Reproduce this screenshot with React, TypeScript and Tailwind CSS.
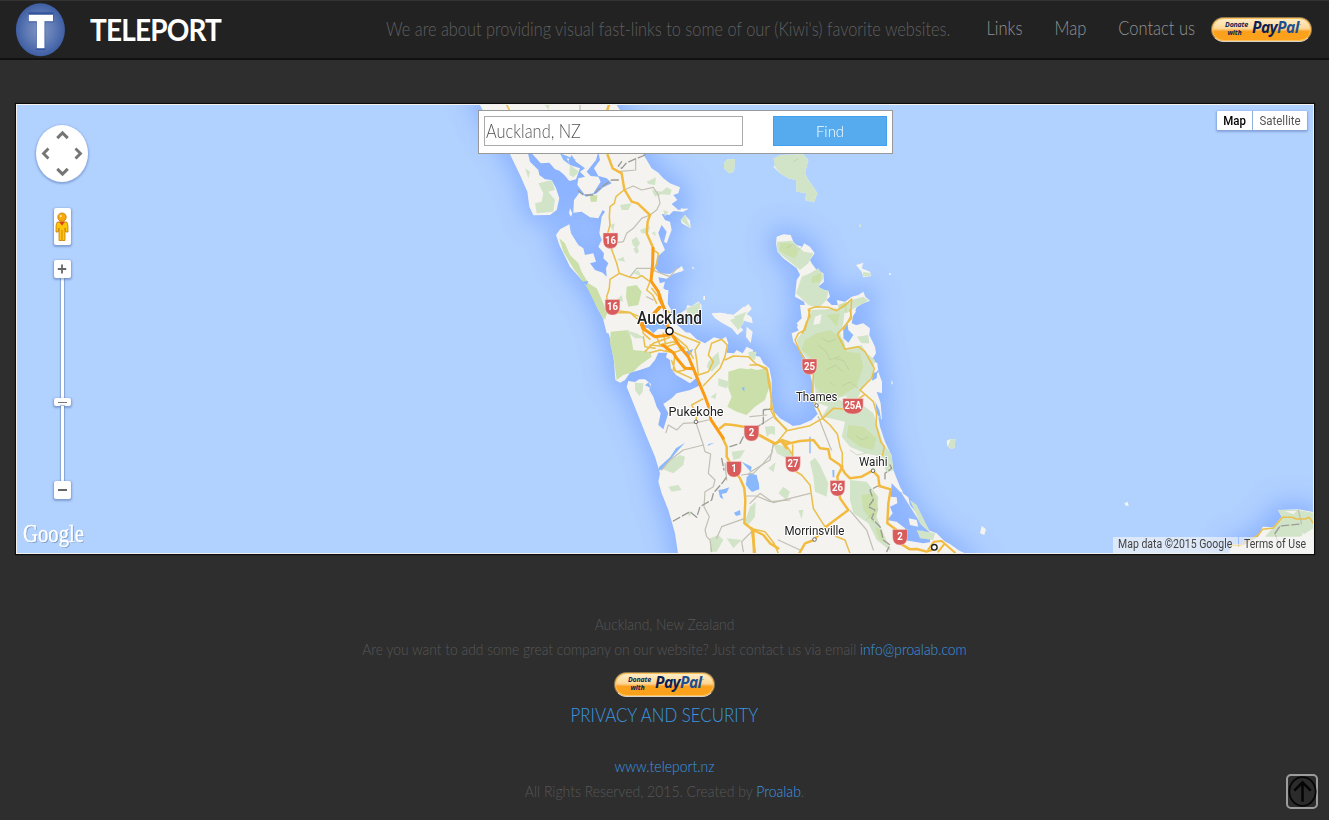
import type { ReactNode } from 'react';
import { ChevronDown, ChevronLeft, ChevronRight, ChevronUp } from 'lucide-react';

const SEA = '#b1d1ff';
const LAND = '#f4f3f0';
const PARK = '#cbdfaa';
const WOOD = '#d2e4c8';

/* Each sheet of the map is drawn at three units to the pixel. */
const NORTH = 'translate(470 100) scale(.33333)';
const GULF = 'translate(680 100) scale(.33333)';
const CITY = 'translate(590 300) scale(.33333)';
const THAMES = 'translate(750 310) scale(.33333)';
const BAY = 'translate(930 400) scale(.33333)';

function Land() {
  return (
    <>
      <g transform={NORTH}>
        <path d="M22 0 L430 0 480 75 520 163 545 205 565 218 580 235 600 250 630 262 625 280 610 285 622 300 605 312 625 330 655 325 640 335 610 333 598 345 575 342 585 360 600 365 605 390 590 430 582 425 590 395 575 375 565 398 572 420 585 450 562 470 556 505 570 520 600 522 636 498 640 512 610 522 590 536 565 532 570 550 585 545 580 565 595 575 592 610 605 632 595 650 650 700 410 700 395 640 375 595 340 545 300 500 268 435 258 405 270 388 298 373 303 400 325 435 340 445 345 465 370 460 378 485 360 490 375 510 398 518 410 530 408 505 415 490 400 475 402 460 385 440 395 420 388 400 395 350 405 335 398 330 385 355 360 352 335 335 310 338 312 300 328 278 350 290 380 280 400 262 425 250 410 235 385 228 372 205 390 180 385 155 378 180 350 215 362 228 385 230 392 245 370 280 345 285 322 255 325 235 345 230 330 215 345 205 318 185 305 165 295 182 300 195 330 205 318 238 298 243 283 225 268 212 255 208 238 188 212 190 190 165 172 150 175 165 180 185 205 210 208 225 225 238 245 240 258 265 268 295 260 330 240 345 190 346 178 320 172 275 150 225 120 163 80 110Z" />
      </g>
      <g transform={CITY}>
        <path d="M0 -30 L235 -30 232 20 245 45 250 80 268 95 300 98 320 118 345 130 372 112 395 118 408 110 415 130 410 158 432 160 440 150 458 160 470 140 490 150 485 165 510 170 520 190 538 205 545 240 545 300 552 335 570 355 600 372 640 400 640 800 270 800 255 700 235 630 215 580 205 545 210 520 195 470 170 410 150 360 130 310 110 260 115 243 135 246 148 238 165 238 183 252 178 270 190 290 200 320 212 340 205 375 220 388 235 340 220 312 245 295 260 280 300 270 332 255 318 235 300 250 280 238 258 225 243 205 240 180 228 172 232 158 205 158 195 180 178 200 150 210 120 218 105 240 90 248 76 240 72 185 60 115 45 65 20 20Z" />
      </g>
      <g transform={GULF}>
        <path d="M290 410 L310 403 332 405 340 425 350 435 368 440 372 430 390 440 404 460 390 480 395 490 410 510 430 520 432 545 415 560 430 570 445 572 450 590 440 600 455 615 475 620 470 600 495 605 515 590 535 585 550 575 556 590 570 602 545 612 530 622 520 645 515 670 540 680 550 700 360 700 350 680 365 670 378 630 372 605 345 590 350 540 360 525 350 505 330 490 310 475 292 455 288 430Z" />
      </g>
      <g transform={THAMES}>
        <path d="M150 -15 L305 -15 318 5 295 35 300 50 340 40 360 55 358 75 375 110 378 130 365 150 382 160 385 185 396 215 396 250 380 245 392 280 396 330 385 320 390 350 405 395 424 435 430 480 450 530 460 548 450 545 425 520 422 560 440 562 442 580 420 590 428 610 412 630 440 635 465 655 462 690 520 700 548 695 575 690 600 702 650 738 -40 738 -40 350 -10 360 65 320 80 335 110 350 150 345 185 330 203 312 192 290 190 230 170 150 150 120 130 95 125 70 150 60 140 40 155 25Z" />
        <path d="M452 545 L475 562 480 585 500 610 520 632 545 672 515 645 490 605Z" />
      </g>
      <g transform={BAY}>
        <path d="M0 392 L20 400 60 440 110 462 0 465Z M895 465 L905 432 940 435 985 410 998 380 1030 382 1055 350 1044 330 1105 328 1150 336 1150 465Z" />
      </g>
    </>
  );
}

function Islands() {
  return (
    <>
      <path transform={NORTH} d="M300 325 L307 340 303 350 297 340Z M540 505 L550 512 548 530Z" />
      <path transform={CITY} d="M292 15 L310 20 325 5 335 20 328 42 305 48 285 42Z M365 42 L390 38 430 45 455 28 475 12 485 25 470 42 485 52 488 70 462 62 445 75 460 90 442 105 425 85 395 68 375 55Z M470 80 L488 95 482 130 468 110Z" />
      <path transform={GULF} d="M132 190 L142 178 165 178 162 215 148 220 132 205Z M280 175 L295 178 300 165 370 163 385 180 375 220 385 240 400 260 412 280 402 307 375 300 380 280 350 275 348 240 325 235 300 220 280 200 290 192Z M2 325 L25 328 5 335Z M2 360 L15 345 30 362 32 385 5 370Z M528 495 L550 488 545 505 570 515 573 528 550 532 545 515Z M537 374 h6 v6 h-6Z M627 518 l10 5 -10 2Z M70 588 h5 v12 h-5Z M36 498 l8 8 -6 1Z M0 500 l12 8 -12 8Z M0 640 L25 625 55 605 65 615 62 640 40 650Z M95 640 L120 638 160 645 190 620 215 628 190 650 190 670 175 690 150 660 110 655Z" />
      <path transform={THAMES} d="M476 625 L500 630 505 650 480 645Z M515 660 L540 680 520 685Z M424 211 l5 8 -4 5Z" />
      <path transform={BAY} d="M155 377 L168 388 163 405 150 400Z M583 310 L593 305 596 317 587 317Z M50 122 L62 117 76 118 74 143 64 147 52 138Z" />
    </>
  );
}

function Terrain() {
  return (
    <>
      <g transform={NORTH} fill={WOOD}>
        <path fill={PARK} d="M268 415 L285 430 300 465 325 490 335 515 355 550 380 565 400 610 412 640 402 660 380 620 350 560 310 505 280 455Z M470 560 L500 555 515 575 505 615 475 620 468 590Z M360 288 L382 285 380 305 362 305Z" />
        <path d="M195 310 L215 305 220 280 205 250 245 240 255 270 235 275 255 300 250 335 200 340Z M300 195 L328 215 310 232 298 225Z M450 315 L485 310 475 330 455 330Z M545 270 L575 275 590 262 605 270 600 285 575 283 555 290Z M530 245 L558 232 555 255 535 252Z M485 420 L500 410 510 430 500 445 488 435Z M510 390 L540 378 535 400 515 400Z M420 375 l14 -5 -4 25Z M440 480 l20 -10 5 15Z M165 205 l15 10 -5 20Z M225 15 L240 10 235 30Z M440 600 l15 -15 5 20Z M580 330 l15 5 -10 15Z M490 520 l15 -10 10 20Z M490 445 l12 -4 5 15 -10 5Z M545 400 l10 -6 2 14Z" />
      </g>
      <g transform={GULF} fill={WOOD}>
        <path d="M132 190 L142 178 165 178 162 215 148 220 132 205Z M280 175 L300 165 370 163 385 180 375 220 385 240 400 260 412 280 402 307 375 300 380 280 350 275 348 240 325 235 300 220 285 200Z M290 425 L335 422 360 445 372 455 400 460 385 490 360 510 330 485 292 455Z M365 530 L390 520 415 505 432 530 415 560 445 575 440 600 415 625 385 615 348 580 355 560Z M480 620 L515 600 550 590 565 602 530 620 500 640 475 635Z M395 640 L440 630 480 650 470 695 390 700Z M2 360 L15 345 32 385Z M550 515 L573 520 568 530 548 528Z M150 660 L190 645 190 670 175 690Z M25 625 L60 605 62 640 35 645Z M537 374 h6 v6 h-6Z" />
        <path fill={PARK} d="M300 430 L330 428 355 455 345 475 320 465 298 450Z M395 530 L425 518 420 545 395 550Z M475 615 L500 605 500 635 478 640Z" />
      </g>
      <g transform={CITY}>
        <path fill={PARK} d="M62 95 L115 90 125 120 130 150 180 155 185 170 150 195 130 215 100 225 80 240 72 180 60 130Z M415 215 L450 205 500 210 530 205 538 260 525 300 495 320 470 345 440 335 412 320 425 290 415 265Z M10 -5 L35 5 48 60 25 25Z" />
        <path fill={WOOD} d="M135 248 L160 250 158 275 148 288 135 270Z M105 90 L140 100 165 115 135 115Z M210 500 L240 480 270 465 285 470 280 495 250 520 225 510Z M355 185 L385 155 390 190 365 215 350 200Z M425 455 L465 450 450 475 430 480Z M525 380 L550 378 555 390 530 410Z M475 155 L500 155 495 180 478 175Z M235 560 l30 -5 10 15 -30 5Z M385 235 l35 10 -10 20 -25 -8Z M480 620 L497 605 495 650 470 680 465 665Z M360 715 L385 705 400 720 380 755 360 755Z M410 715 L455 720 430 745Z M290 25 L330 10 325 45 290 42Z M430 50 L470 35 455 65Z M290 640 l15 -8 -5 18Z M465 550 l18 -5 -10 14Z M535 505 l22 -18 -6 30Z M362 290 l18 -12 -4 20Z" />
      </g>
      <g transform={THAMES}>
        <path fill={WOOD} d="M185 0 L285 -5 280 40 270 70 285 115 335 105 350 130 375 150 365 200 335 240 320 270 345 290 370 310 400 400 425 435 395 440 345 430 300 410 275 380 285 335 240 325 215 320 235 290 205 280 195 240 185 160 150 120 140 90 160 60Z M180 455 L195 443 210 465 235 520 230 560 195 545 190 500Z M70 400 L105 410 125 430 135 470 110 445 80 430Z M45 350 L75 350 75 375 50 365Z M300 510 L350 515 385 560 380 620 400 670 425 725 380 690 355 640 310 610 300 570Z M145 600 L160 600 155 628Z M85 550 L100 530 120 545 110 570Z M320 80 L355 75 358 100 335 100Z M500 660 L555 670 550 690 510 685Z M480 570 L500 585 540 665 510 640Z M345 445 l30 5 -10 20Z M395 440 L425 435 430 480 410 490Z" />
        <path fill={PARK} d="M165 90 L200 70 240 60 280 90 290 125 330 130 340 170 320 230 270 260 220 255 195 230 190 180 180 140 155 120Z M295 345 L340 350 380 385 370 420 330 410 290 380Z M335 555 L375 550 385 600 370 640 340 600Z M230 15 L270 10 260 50Z M0 175 L40 185 55 220 45 250 20 270 -10 285Z M375 650 l20 10 10 40 -20 -15Z" />
        <path fill={LAND} d="M195 20 L215 12 210 40 190 45Z M262 265 l30 -8 -12 20Z M205 290 l20 5 -12 20Z" />
      </g>
      <g transform={BAY} fill={WOOD}>
        <path d="M62 117 L76 118 74 143 64 147 54 138Z M1044 330 L1105 330 1150 338 1150 385 1110 410 1040 410 1005 410 1030 382 1055 350Z" />
        <path fill={LAND} d="M1065 333 l35 0 -10 10Z M1115 400 l20 5 15 -15 0 30 -25 5Z" />
      </g>
      <g fill="none" stroke="#b5c99a" strokeWidth="1" opacity=".55">
        <path d="M818 345 l8 6 4 9 10 -4 M826 370 l10 -5 7 7 M835 358 l9 3 5 9 M850 450 l7 5 9 -2 M787 248 l6 -4 5 6 4 -3 M842 386 l8 -4 8 6 M866 520 l6 -6 M793 162 l5 -3 M822 338 l6 4 8 -3 M856 436 l6 4 6 -3 M830 382 l5 4" />
      </g>
      <g fill="#8ab8fc">
        <path transform={CITY} d="M470 530 L490 525 505 545 508 568 485 575 468 555Z M455 485 L485 500 482 515Z M385 570 L400 568 418 562 410 578 395 582 400 598 390 592Z M432 638 l18 -8 2 14 -14 4Z M285 428 L265 450 240 480 215 508 205 512 208 500 240 472 258 445Z M165 255 l12 -8 5 18Z M352 438 l22 -10 -18 4Z M455 265 l8 -5 0 15Z M160 60 L190 70 215 60 232 70 228 88 205 86 190 100 175 85 155 80Z M255 140 l30 15 25 -8 -10 20Z" />
        <path transform={THAMES} d="M280 50 L292 35 295 60 310 75 295 98 280 85Z M376 275 L388 300 394 330 380 310Z M368 190 L382 185 380 205 366 212Z M247 480 l6 0 0 22 -5 0Z M178 380 l4 0 0 50 -4 0Z M-5 490 L20 495 28 530 10 545 -5 535Z M365 210 l18 -30 2 6Z" />
        <path transform={NORTH} d="M270 160 L320 180 290 175 300 195 280 180Z M335 545 l20 -2 -5 12Z" />
      </g>
    </>
  );
}

function Roads() {
  return (
    <g fill="none" strokeLinejoin="round" strokeLinecap="round">
      <g stroke="#c2bfb3" strokeWidth="3.6">
        <path transform={NORTH} d="M462 270 L490 258 515 270 550 262 565 285 570 310 560 330 540 345 515 355 490 385 470 400 460 425 440 428 M480 530 L500 505 540 505 560 515 600 530 620 505 M330 15 V35 M445 215 L497 210 497 175 M530 590 L550 600" />
        <path transform={CITY} d="M228 398 L235 375 260 390 280 370 320 368 355 360 M318 368 L340 435 280 450 240 480 215 510 M340 435 L345 455 362 462 355 520 375 540 370 560 345 575 342 620 358 650 345 690 350 710 360 720 365 755 M465 655 L395 680 380 715 M465 588 L500 588 540 605 600 600 M455 525 L490 520 520 490 545 460 550 430 M495 385 L550 350 M490 690 L455 725 460 755 M410 540 L405 490" />
        <path transform={THAMES} d="M205 320 L240 410 245 420 M300 602 L350 660 370 720 M0 580 L30 550 70 578 180 550 M0 487 L60 450 70 405 M0 320 L50 315 M85 690 L150 720" />
        <path transform={BAY} d="M1105 330 L1115 372 M1045 430 L1035 400 1050 378" />
      </g>
      <g stroke="#9b9b96" strokeWidth="4" strokeDasharray="22 9">
        <path transform={NORTH} d="M525 165 L470 188 455 205 445 198 455 185 M445 240 L425 240 385 268 370 285 340 285 325 272" />
        <path transform={CITY} d="M250 663 L300 635 320 652 330 620 365 600 370 580 400 545 410 530 M395 475 L402 510 M420 440 L450 430 465 400 520 370 520 330 545 327" />
        <path transform={THAMES} d="M390 525 L360 540 370 570 355 590 375 600 365 625 390 650 400 690 420 705 410 725 M420 465 L425 475 405 490 405 515 M65 298 h-25" />
        <path transform={BAY} d="M1035 400 L1050 378 1110 372" />
      </g>
      <g stroke="#eabf4c" strokeWidth="4.6">
        <path transform={NORTH} d="M108 10 L118 30 M462 270 L438 290 433 310 420 320 418 350 420 375 413 400 422 440 440 490 448 520 420 538 418 565 410 590 415 620 M448 520 L480 532 500 535 515 527 540 545 530 570 548 585 560 610 M440 632 L480 637 500 655 510 660 M550 450 L565 460 560 490 550 515 M545 565 L565 590 M580 620 L600 640 585 665" />
        <path transform={CITY} d="M80 38 L120 38 148 50 155 70 160 100 180 118 M240 92 L270 105 330 128 315 150 320 180 325 225 M180 158 L210 150 250 158 280 148 M200 110 L210 135 250 125 285 145 M180 135 L230 140 262 130 M245 182 L258 215 285 210 M325 225 L355 215 370 185 355 165 365 130 395 118 412 135 405 170 390 205 340 257 M405 180 L430 168 475 170 498 192 530 205 535 245 545 295 542 330 555 355 590 388 M338 297 L305 315 320 345 318 365 M255 110 L290 140 310 175 M195 145 L165 140 160 110 M220 100 L230 150 M165 155 L190 130 240 112 M255 155 L250 210 305 235" />
        <path transform={THAMES} d="M180 0 L172 35 165 60 145 70 135 90 150 125 165 150 M190 190 L188 265 200 287 218 325 180 347 110 362 75 320 65 285 60 220 52 180 25 165 0 165 M110 362 L80 398 M218 325 L250 295 290 298 M320 270 L345 253 370 275 380 310 378 345 392 395 403 410 398 435 M345 253 L330 240 365 205 373 175 345 125 325 110 285 118 262 72 305 25 300 0 M218 325 L240 345 262 372 270 410 277 430 277 470 M128 405 L128 440 130 480 155 495 180 525 190 595 215 635 225 650 M225 650 L260 680 285 690 300 730 M0 655 L45 665 72 700 85 730 M105 400 L125 430" />
        <path transform={BAY} d="M900 435 L930 437 985 405 998 388 1030 384 1057 352 1085 352 1100 357 1125 357 1138 352 1150 370" />
        <path transform={GULF} d="M368 700 L380 665 390 650 385 628 408 620 445 622 470 632 500 612 515 597 512 650 490 690" />
      </g>
      <g stroke="#f2bb3f" strokeWidth="7.4">
        <path transform={NORTH} d="M420 5 L412 30 M413 165 L428 205 455 220 463 268 485 305 503 310 540 345 533 365 530 400 550 445" />
        <path transform={CITY} d="M398 415 L410 440 410 470 430 505 450 535 463 565 466 600 463 670 490 690 492 765 M390 385 L405 373 430 375 470 382 500 400 555 432 575 420 600 428 M490 690 L520 705 540 730 565 745 M575 425 L590 445" />
        <path transform={THAMES} d="M20 372 L75 400 95 392 105 403 150 393 190 390 210 415 235 418 240 445 270 465 285 490 300 505 335 500 368 482 385 500 388 528 422 538 415 580 412 640 440 660 M277 470 L262 500 270 565 295 600 228 650 192 690 165 700 148 730 M5 655 L15 730 M450 700 L480 718 500 717 530 725 560 715" />
        <path transform={BAY} d="M-5 448 L12 425 35 423 75 458 M25 455 L42 433" strokeWidth="6" />
      </g>
      <g stroke="#fb9a13" strokeWidth="9">
        <path transform={NORTH} d="M549 445 L548 490 543 543 565 575 580 620 M550 642 L568 622 M515 665 L525 690" />
        <path transform={CITY} d="M208 -5 L225 30 232 75 240 95 270 140 295 170 310 205 328 250 345 290 358 325 362 358 400 415 M152 68 L158 85 195 110 238 105 M218 135 L250 158 260 175 285 205 310 206 M195 38 L210 22" />
      </g>
    </g>
  );
}

const shields = [
  { n: '16', x: 610.5, y: 240.5 },
  { n: '16', x: 612.5, y: 307 },
  { n: '25', x: 809.5, y: 366.5 },
  { n: '25A', x: 853, y: 406 },
  { n: '2', x: 751.5, y: 433 },
  { n: '1', x: 734, y: 469 },
  { n: '27', x: 793, y: 464 },
  { n: '26', x: 837.5, y: 488 },
  { n: '2', x: 900, y: 537 },
];

const towns = [
  { name: 'Auckland', x: 637, y: 324, w: 65, size: 18, weight: 500, dx: 669.5, dy: 331, r: 3.5 },
  { name: 'Pukekohe', x: 668.5, y: 416.3, w: 55, size: 13.3, weight: 400, dx: 696, dy: 421.8, r: 1.8 },
  { name: 'Thames', x: 796, y: 400.8, w: 41.5, size: 13.3, weight: 400, dx: 816.5, dy: 405.5, r: 1.8 },
  { name: 'Waihi', x: 859, y: 465.8, w: 28.5, size: 13.3, weight: 400, dx: 873, dy: 470.7, r: 1.8 },
  { name: 'Morrinsville', x: 784.5, y: 534.8, w: 60, size: 13.3, weight: 400, dx: 814.5, dy: 539.5, r: 1.8 },
];

function MapCanvas() {
  return (
    <svg viewBox="17 105 1296 448" preserveAspectRatio="none" className="col-start-1 row-start-1 block h-full w-full font-[Roboto,sans-serif]">
      <defs>
        <filter id="shelf" x="-20%" y="-20%" width="140%" height="140%">
          <feGaussianBlur stdDeviation="12" />
        </filter>
        <g id="land"><Land /></g>
        <g id="islands"><Islands /></g>
      </defs>
      <rect x="0" y="90" width="1340" height="480" fill={SEA} />
      <g filter="url(#shelf)" fill="#86aeff" stroke="#86aeff" strokeWidth="42" opacity=".9">
        <use href="#land" />
      </g>
      <use href="#land" fill={LAND} />
      <use href="#islands" fill={LAND} />
      <Terrain />
      <Roads />
      {shields.map((s, i) => {
        const h = s.n.length > 2 ? 10.2 : 7.4;
        return (
          <g key={i} transform={`translate(${s.x} ${s.y})`}>
            <path
              d={`M${-h} -7.6 H${h} V-1 Q${h} 5.5 ${h * 0.5} 7.2 Q0 9 ${-h * 0.5} 7.2 Q${-h} 5.5 ${-h} -1Z`}
              fill="#d85c5c"
              stroke="#f3dcd9"
              strokeWidth=".5"
              strokeLinejoin="round"
            />
            <text y="3.4" textAnchor="middle" fontSize="11" fontWeight="700" textLength={[5.5, 11, 17][s.n.length - 1]} lengthAdjust="spacingAndGlyphs" fill="#fff">{s.n}</text>
          </g>
        );
      })}
      {towns.map((t) => (
        <g key={t.name}>
          <text x={t.x} y={t.y} fontSize={t.size} fontWeight={t.weight} textLength={t.w} lengthAdjust="spacingAndGlyphs" fill="#222" stroke="#fff" strokeWidth="2.2" strokeLinejoin="round" paintOrder="stroke">
            {t.name}
          </text>
          <circle cx={t.dx} cy={t.dy} r={t.r} fill="#fff" stroke={t.r > 3 ? '#111' : '#666'} strokeWidth={t.r > 3 ? 1.5 : 1} />
        </g>
      ))}
      <circle cx="934.3" cy="547.3" r="2.8" fill="#fff" stroke="#222" strokeWidth="1.4" />
    </svg>
  );
}

function PayPal() {
  return (
    <a href="#donate" className="flex h-[25px] w-[101px] items-center rounded-full border border-[#8f7b52] border-b-[#d8d3c8] bg-linear-to-b from-[#ffeecb] via-[#fdd896] via-45% to-[#fba11c] to-58% pl-[10px] font-['Open_Sans',sans-serif] text-[#0b1f52] italic inset-ring inset-ring-[#ffc057]">
      <span className="flex w-[29px] flex-col items-center pb-[2px] text-[7px] leading-[8px] font-bold tracking-[-0.2px]">
        <span>Donate</span>
        <span className="pr-[4px]">with</span>
      </span>
      <span className="pb-[3px] pl-px text-[15.5px] leading-none font-bold tracking-[-0.55px]">
        Pay<span className="text-[#1d4f90]">Pal</span>
      </span>
      <span className="pb-[9px] text-[3px] text-[#1d4f90]">™</span>
    </a>
  );
}

function Logo() {
  return (
    <svg viewBox="0 0 50 54" className="mt-px h-[54px] w-[50px]">
      <defs>
        <radialGradient id="ball">
          <stop offset="0" stopColor="#8496c4" />
          <stop offset=".55" stopColor="#607bb5" />
          <stop offset="1" stopColor="#3f5fa4" />
        </radialGradient>
      </defs>
      <ellipse cx="25.4" cy="26.8" rx="24.5" ry="26.5" fill="url(#ball)" />
      <path d="M13.5 9.3H38.5V19.3H30.2V47H21.2V19.3H13.5Z" fill="#34549d" />
      <path d="M13.8 11.8H38V18.3H29.5V45.2H21.8V18.3H13.8Z" fill="#fff" />
    </svg>
  );
}

const tile = 'flex items-center justify-center rounded-[2px] bg-white shadow-[0_1px_2px_1px_rgba(70,100,160,.45)]';

function MapControls() {
  return (
    <div className="flex w-[52px] flex-col items-center">
      <div className="grid h-[57px] w-[52px] grid-cols-3 grid-rows-3 place-items-center rounded-[50%] bg-white px-[2px] py-[2px] text-[#757575] shadow-[0_1px_2px_1px_rgba(70,100,160,.4)]">
        <ChevronUp className="col-start-2 row-start-1 h-[21px] w-[21px]" strokeWidth={3.4} strokeLinecap="butt" strokeLinejoin="miter" />
        <ChevronLeft className="col-start-1 row-start-2 h-[23px] w-[20px]" strokeWidth={3.4} strokeLinecap="butt" strokeLinejoin="miter" />
        <ChevronRight className="col-start-3 row-start-2 h-[23px] w-[20px]" strokeWidth={3.4} strokeLinecap="butt" strokeLinejoin="miter" />
        <ChevronDown className="col-start-2 row-start-3 h-[21px] w-[21px]" strokeWidth={3.4} strokeLinecap="butt" strokeLinejoin="miter" />
      </div>
      <div className={`${tile} mt-[26px] h-[37px] w-[17px]`}>
        <svg viewBox="0 0 14 30" className="h-[30px] w-[14px]" stroke="#c47a08" strokeWidth=".8">
          <path d="M2.2 10 L11.8 10 Q13.4 12 13 20 H10.9 L10 16 V28.5 H4 V16 L3.1 20 H1 Q.6 12 2.2 10Z" fill="#fdc60c" />
          <path d="M7 18 V28" />
          <path d="M4.2 9.8 H9.8 L7 13.8Z" fill="#d9401c" stroke="none" />
          <circle cx="7" cy="5.2" r="4.2" fill="#f9a80c" />
          <circle cx="5.8" cy="4" r="1.2" fill="#ffe07a" stroke="none" />
        </svg>
      </div>
      <div className={`${tile} z-10 mt-[15px] h-[18px] w-[17px]`}>
        <svg viewBox="0 0 10 10" className="size-[10px]" stroke="#666" strokeWidth="1.8"><path d="M.8 5H9.2M5 .5V9.5" /></svg>
      </div>
      <div className="h-[120px] w-[3px] bg-white shadow-[0_0_1px_1px_rgba(90,120,170,.45)]" />
      <div className={`${tile} h-[8px] w-[17px]`}><div className="h-px w-[9px] bg-[#777]" /></div>
      <div className="h-[75px] w-[3px] bg-white shadow-[0_0_1px_1px_rgba(90,120,170,.45)]" />
      <div className={`${tile} z-10 h-[18px] w-[17px]`}><div className="h-[2px] w-[9px] bg-[#666]" /></div>
    </div>
  );
}

function Tall({ children, className = 'scale-y-[1.16]' }: { children: ReactNode; className?: string }) {
  return <span className={`inline-block whitespace-nowrap ${className}`}>{children}</span>;
}

export default function App() {
  return (
    <div className="flex h-[820px] w-[1329px] flex-col overflow-hidden bg-[#2e2e2e] font-[Lato,sans-serif] font-light">
      <header className="flex h-[60px] shrink-0 items-center border-t border-b-2 border-t-[#333] border-b-[#111] bg-[#222] pl-[15px]">
        <div className="flex w-[371px] items-center gap-[25px]">
          <Logo />
          <Tall className="scale-y-[1.09] pb-[2px] text-[28px] leading-none font-bold tracking-[-0.85px] text-white">TELEPORT</Tall>
        </div>
        <Tall className="w-[600.5px] scale-y-[1.16] text-[16.35px] text-[#5f5f5f]">We are about providing visual fast-links to some of our (Kiwi's) favorite websites.</Tall>
        <nav className="flex w-[224.5px] gap-[32px] pb-[3px] text-[16.5px] text-[#929292]">
          <a href="#links"><Tall>Links</Tall></a>
          <a href="#map"><Tall>Map</Tall></a>
          <a href="#contact"><Tall>Contact us</Tall></a>
        </nav>
        <PayPal />
      </header>

      <main id="map" className="mx-[16px] mt-[44px] grid h-[450px] w-[1298px] shrink-0 grid-cols-1 grid-rows-1 border border-[#f3f1ee] shadow-[0_0_1px_1px_#0c0c0c]">
        <MapCanvas />
        <div className="z-10 col-start-1 row-start-1 grid min-h-0 grid-cols-[461px_415px_1fr]">
          <div className="flex flex-col justify-between pt-[20px] pl-[19px]">
            <MapControls />
            <svg viewBox="0 0 76 36" className="-ml-[15px] h-[36px] w-[76px]">
              <text x="3" y="25.5" fontFamily="'Liberation Serif', serif" fontSize="25" textLength="61" lengthAdjust="spacingAndGlyphs" fill="#6f8fbb" opacity=".8">Google</text>
              <text x="2" y="24.5" fontFamily="'Liberation Serif', serif" fontSize="25" textLength="61" lengthAdjust="spacingAndGlyphs" fill="#fff" stroke="#fff" strokeWidth=".4">Google</text>
            </svg>
          </div>
          <form className="mt-[5px] flex h-[44px] w-[415px] border border-[#999] bg-white p-[5px]">
            <div className="flex h-[30px] w-[259px] items-center border border-[#aaa] pl-px text-[16.4px] text-[#555]"><Tall>Auckland, NZ</Tall></div>
            <button type="button" className="ml-[30px] h-[30px] w-[114px] border border-[#41a0ee] bg-[#56abee] pb-[2px] text-[14.8px] leading-none font-light text-white"><Tall className="scale-y-[1.1]">Find</Tall></button>
          </form>
          <div className="flex flex-col items-end justify-between pt-[6px] font-[Roboto,sans-serif] font-normal">
            <div className="mr-[6px] flex h-[19px] w-[90px] items-center rounded-[1px] bg-white text-[11.5px] leading-none text-[#565656] shadow-[0_1px_2px_1px_rgba(70,100,160,.4)]">
              <span className="flex h-full w-[36px] items-center justify-center border-r border-[#8fb0dd] font-medium text-black"><Tall>Map</Tall></span>
              <span className="flex flex-1 items-center justify-center"><Tall>Satellite</Tall></span>
            </div>
            <div className="flex h-[16px] items-center gap-px text-[10.5px] leading-none text-[#444]">
              <span className="flex h-full w-[125px] items-center bg-[#f5f5f5]/65 pl-[5px]"><Tall>Map data ©2015 Google</Tall></span>
              <span className="flex h-full w-[74px] items-center bg-[#f5f5f5]/65 pl-[5px]"><Tall>Terms of Use</Tall></span>
            </div>
          </div>
        </div>
      </main>

      <footer className="grid grow grid-cols-[1fr_auto_1fr] pt-[57px]">
        <div className="col-start-2 flex flex-col items-center text-[13.85px] leading-[25px] text-[#575757]">
          <Tall>Auckland, New Zealand</Tall>
          <Tall>Are you want to add some great company on our website? Just contact us via email <a href="#mail" className="text-[#3b97e0]">info@proalab.com</a></Tall>
          <div className="mt-[11px]"><PayPal /></div>
          <a href="#privacy" className="mt-[5px] text-[16.85px] text-[#3b97e0]"><Tall>PRIVACY AND SECURITY</Tall></a>
          <a href="#home" className="mt-[26px] text-[14px] text-[#3b97e0]"><Tall>www.teleport.nz</Tall></a>
          <Tall className="scale-y-[1.16] text-[14px]">All Rights Reserved, 2015. Created by <a href="#proalab" className="text-[#3b97e0]">Proalab</a>.</Tall>
        </div>
        <a href="#top" className="mr-[11px] mb-[11px] flex h-[35px] w-[32px] items-center justify-center self-end justify-self-end rounded-[5px] border-2 border-[#9c9c9c] bg-[#2b2b2b]">
          <svg viewBox="0 0 30 32" className="h-[31px] w-[29px] shrink-0" fill="none" stroke="#050505">
            <ellipse cx="15" cy="16" rx="13.6" ry="14.8" strokeWidth="1.8" />
            <path d="M15 26.5V7 M6.5 15L15 6.5L23.5 15" strokeWidth="2.6" />
          </svg>
        </a>
      </footer>
    </div>
  );
}
